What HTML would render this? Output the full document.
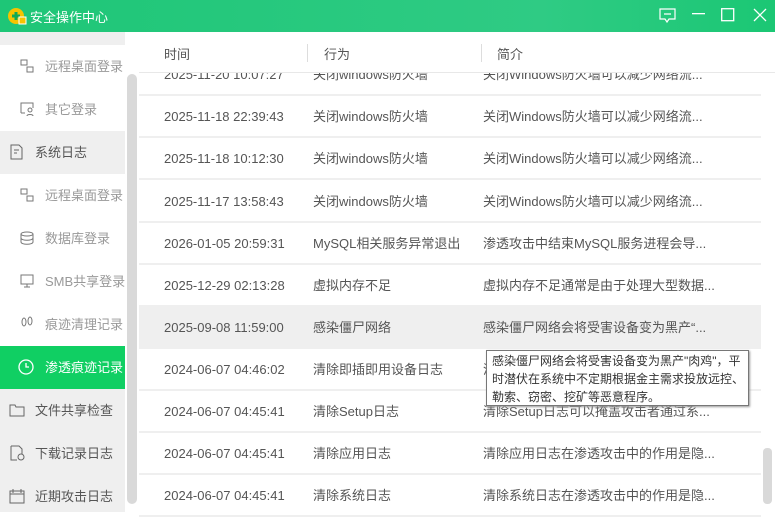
<!DOCTYPE html>
<html><head><meta charset="utf-8"><style>
*{margin:0;padding:0;box-sizing:border-box}
body{width:775px;height:512px;overflow:hidden;font-family:"Liberation Sans","Noto Sans CJK SC",sans-serif;font-size:13px;color:#555;background:#fff;position:relative}
.title{position:absolute;left:0;top:0;width:775px;height:32px;background:linear-gradient(90deg,#1ec677,#2fcb84 70%,#1bc774);color:#fff}
.title .t{position:absolute;left:30px;top:7px;font-size:13px}
.side{position:absolute;left:0;top:32px;width:125px;height:480px;background:#efefef;overflow:hidden}
.it{position:absolute;left:0;width:125px;height:43px;line-height:43px;white-space:nowrap;overflow:hidden}
.sub{background:#fff;color:#999;padding-left:45px}
.main{background:#efefef;color:#555;padding-left:35px}
.act{background:#10cf63;color:#fff;padding-left:45px}
.ic{position:absolute;top:13px;width:16px;height:16px}
.sb{position:absolute;left:125px;top:32px;width:14px;height:480px;background:#fff}
.sb div{position:absolute;left:2px;top:42px;width:10px;height:430px;background:#d9d9d9;border-radius:5px}
.hd{position:absolute;left:139px;top:32px;width:636px;height:41px;background:#fff;border-bottom:1px solid #e8e8e8}
.hd span{position:absolute;top:12px;color:#555}
.hd i{position:absolute;top:12px;width:1px;height:18px;background:#ddd}
.row{position:absolute;left:139px;width:622px;height:42px;border-bottom:2px solid #efefef;line-height:42px;white-space:nowrap}
.row span{position:absolute}
.rsb{position:absolute;left:763px;top:448px;width:9px;height:56px;background:#d9d9d9;border-radius:4px}
.tip{position:absolute;left:486px;top:350px;width:263px;height:56px;background:#fff;border:1px solid #777;box-shadow:1px 1px 2px #999;font-size:12px;line-height:18px;padding:1px 3px 1px 5px;color:#333}
</style></head><body>
<div class="title">
<svg style="position:absolute;left:7px;top:6px" width="20" height="20"><circle cx="9" cy="10" r="8" fill="#f5c400"/><path d="M5 10h8M9 6v8" stroke="#1a5" stroke-width="3"/><rect x="12" y="11" width="7" height="7" fill="#f5c400" stroke="#fff"/></svg>
<span class="t">安全操作中心</span>
<svg style="position:absolute;left:659px;top:8px" width="17" height="15" fill="none" stroke="#fff" stroke-width="1.2"><path d="M1 1h15v10H10l-2 3-2-3H1z M5 6h7"/></svg>
<svg style="position:absolute;left:692px;top:13px" width="14" height="2"><rect width="13" height="1.3" fill="#fff"/></svg>
<svg style="position:absolute;left:721px;top:8px" width="14" height="14"><rect x=".7" y=".7" width="12" height="12" fill="none" stroke="#fff" stroke-width="1.3"/></svg>
<svg style="position:absolute;left:753px;top:8px" width="14" height="14"><path d="M1 1l12 12M13 1L1 13" stroke="#fff" stroke-width="1.3"/></svg>
</div>
<div class="side">
<div class="it sub" style="top:13px">远程桌面登录<svg class="ic" style="left:19px" fill="none" stroke="#777"><rect x="2" y="2" width="6" height="5"/><rect x="8" y="9" width="6" height="5"/></svg></div>
<div class="it sub" style="top:56px">其它登录<svg class="ic" style="left:19px" fill="none" stroke="#777"><path d="M2 12V2h12v5M2 12h4"/><circle cx="11" cy="9" r="2"/><path d="M8 15c0-2 6-2 6 0"/></svg></div>
<div class="it main" style="top:99px">系统日志<svg class="ic" style="left:9px" fill="none" stroke="#666"><path d="M2 1h8l3 3v11H2zM5 6h5M5 9h3"/></svg></div>
<div class="it sub" style="top:142px">远程桌面登录<svg class="ic" style="left:19px" fill="none" stroke="#777"><rect x="2" y="2" width="6" height="5"/><rect x="8" y="9" width="6" height="5"/></svg></div>
<div class="it sub" style="top:185px">数据库登录<svg class="ic" style="left:19px" fill="none" stroke="#777"><ellipse cx="8" cy="4" rx="6" ry="2"/><path d="M2 4v8c0 3 12 3 12 0V4M2 8c0 3 12 3 12 0"/></svg></div>
<div class="it sub" style="top:228px">SMB共享登录<svg class="ic" style="left:19px" fill="none" stroke="#777"><rect x="2" y="2" width="12" height="9"/><path d="M8 11v3M5 14h6"/></svg></div>
<div class="it sub" style="top:271px">痕迹清理记录<svg class="ic" style="left:19px" fill="none" stroke="#777"><ellipse cx="5" cy="6" rx="2" ry="4"/><ellipse cx="11" cy="5" rx="2" ry="4"/></svg></div>
<div class="it act" style="top:314px">渗透痕迹记录<svg class="ic" style="left:18px" fill="none" stroke="#fff" stroke-width="1.3"><circle cx="8" cy="8" r="7"/><path d="M8 4v4h3"/></svg></div>
<div class="it main" style="top:357px">文件共享检查<svg class="ic" style="left:9px" fill="none" stroke="#666"><path d="M1 3h5l1 2h8v9H1z"/></svg></div>
<div class="it main" style="top:400px">下载记录日志<svg class="ic" style="left:9px" fill="none" stroke="#666"><path d="M2 1h8l3 3v5M2 1v14h6"/><circle cx="12" cy="12" r="3"/></svg></div>
<div class="it main" style="top:443px">近期攻击日志<svg class="ic" style="left:9px" fill="none" stroke="#666"><rect x="1" y="3" width="14" height="12"/><path d="M4 1v4M12 1v4M1 6h14"/></svg></div>
</div>
<div class="sb"><div></div></div>
<div class="row" style="top:54px;height:42px"><span style="left:25px">2025-11-20 10:07:27</span><span style="left:174px">关闭windows防火墙</span><span style="left:344px">关闭Windows防火墙可以减少网络流...</span></div>
<div class="hd" style="z-index:2"><span style="left:25px">时间</span><i style="left:168px"></i><span style="left:185px">行为</span><i style="left:342px"></i><span style="left:358px">简介</span></div>
<div class="row" style="top:96px"><span style="left:25px">2025-11-18 22:39:43</span><span style="left:174px">关闭windows防火墙</span><span style="left:344px">关闭Windows防火墙可以减少网络流...</span></div>
<div class="row" style="top:138px"><span style="left:25px">2025-11-18 10:12:30</span><span style="left:174px">关闭windows防火墙</span><span style="left:344px">关闭Windows防火墙可以减少网络流...</span></div>
<div class="row" style="top:181px"><span style="left:25px">2025-11-17 13:58:43</span><span style="left:174px">关闭windows防火墙</span><span style="left:344px">关闭Windows防火墙可以减少网络流...</span></div>
<div class="row" style="top:223px"><span style="left:25px">2026-01-05 20:59:31</span><span style="left:174px">MySQL相关服务异常退出</span><span style="left:344px">渗透攻击中结束MySQL服务进程会导...</span></div>
<div class="row" style="top:265px"><span style="left:25px">2025-12-29 02:13:28</span><span style="left:174px">虚拟内存不足</span><span style="left:344px">虚拟内存不足通常是由于处理大型数据...</span></div>
<div class="row" style="top:307px;background:#efefef"><span style="left:25px">2025-09-08 11:59:00</span><span style="left:174px">感染僵尸网络</span><span style="left:344px">感染僵尸网络会将受害设备变为黑产“...</span></div>
<div class="row" style="top:349px"><span style="left:25px">2024-06-07 04:46:02</span><span style="left:174px">清除即插即用设备日志</span><span style="left:344px">清</span></div>
<div class="row" style="top:391px"><span style="left:25px">2024-06-07 04:45:41</span><span style="left:174px">清除Setup日志</span><span style="left:344px">清除Setup日志可以掩盖攻击者通过系...</span></div>
<div class="row" style="top:433px"><span style="left:25px">2024-06-07 04:45:41</span><span style="left:174px">清除应用日志</span><span style="left:344px">清除应用日志在渗透攻击中的作用是隐...</span></div>
<div class="row" style="top:475px"><span style="left:25px">2024-06-07 04:45:41</span><span style="left:174px">清除系统日志</span><span style="left:344px">清除系统日志在渗透攻击中的作用是隐...</span></div>
<div class="rsb"></div>
<div class="tip">感染僵尸网络会将受害设备变为黑产"肉鸡"，平时潜伏在系统中不定期根据金主需求投放远控、勒索、窃密、挖矿等恶意程序。</div>
</body></html>
